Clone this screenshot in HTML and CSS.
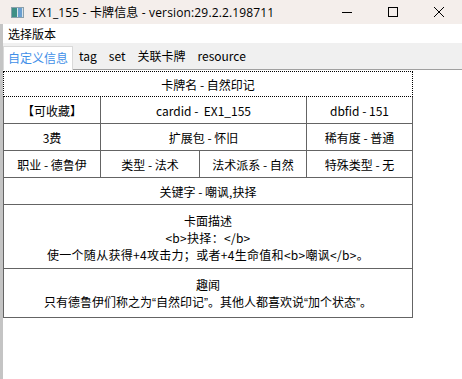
FILE: index.html
```html
<!DOCTYPE html>
<html lang="zh-CN">

<head>
  <meta charset="UTF-8" />
  <title>EX1_155 - 卡牌信息</title>
  <link rel="stylesheet" href="styles.css">
</head>

<body>
  <div class="win">
    <!--标题栏-->
    <div class="titlebar">
      <span class="appicon"><i></i><b></b></span>
      <span class="title">EX1_155 - 卡牌信息 - version:29.2.2.198711</span>
      <span class="ctl">
        <svg width="12" height="12" viewBox="0 0 12 12"><path d="M1 6.5h10" stroke="#000" stroke-width="1"/></svg>
      </span>
      <span class="ctl">
        <svg width="12" height="12" viewBox="0 0 12 12"><rect x="1.5" y="1.5" width="9" height="9" fill="none" stroke="#000" stroke-width="1"/></svg>
      </span>
      <span class="ctl">
        <svg width="12" height="12" viewBox="0 0 12 12"><path d="M1 1l10 10M11 1L1 11" stroke="#000" stroke-width="1"/></svg>
      </span>
    </div>
    <!--菜单-->
    <div class="menubar">选择版本</div>
    <!--选项卡-->
    <div class="tabs">
      <span class="tab current">自定义信息</span>
      <span class="tab">tag</span>
      <span class="tab">set</span>
      <span class="tab">关联卡牌</span>
      <span class="tab">resource</span>
    </div>
    <div class="body">
      <div class="card">
        <div class="row focus"><div class="cell full">卡牌名 - 自然印记</div></div>
        <div class="row">
          <div class="cell c1">【可收藏】</div>
          <div class="cell c23">cardid -&nbsp; EX1_155</div>
          <div class="cell c4">dbfid - 151</div>
        </div>
        <div class="row">
          <div class="cell c1">3费</div>
          <div class="cell c23">扩展包 - 怀旧</div>
          <div class="cell c4">稀有度 - 普通</div>
        </div>
        <div class="row">
          <div class="cell c1">职业 - 德鲁伊</div>
          <div class="cell c2">类型 - 法术</div>
          <div class="cell c3">法术派系 - 自然</div>
          <div class="cell c4">特殊类型 - 无</div>
        </div>
        <div class="row"><div class="cell full">关键字 - 嘲讽,抉择</div></div>
        <div class="row"><div class="cell full multi">卡面描述<br><span class="wide">&lt;b&gt;抉择：&lt;/b&gt;</span><br><span class="wide">使一个随从获得+4攻击力；或者+4生命值和&lt;b&gt;嘲讽&lt;/b&gt;。</span></div></div>
        <div class="row"><div class="cell full multi">趣闻<br>只有德鲁伊们称之为<span class="q">“</span>自然印记<span class="q">”</span>。其他人都喜欢说<span class="q">“</span>加个状态<span class="q">”</span>。</div></div>
      </div>
    </div>
  </div>
</body>

</html>
```

FILE: styles.css
```css
* {
  padding: 0;
  margin: 0;
  box-sizing: border-box;
}

body {
  width: 462px;
  height: 379px;
  overflow: hidden;
  background: #fff;
  font-family: "Noto Sans CJK SC", "Noto Sans", sans-serif;
  font-size: 12px;
  color: #000;
}

.win {
  height: 379px;
  border-left: 3px solid #c4c4c4;
  position: relative;
}

.titlebar {
  height: 24px;
  background: #f4eeeb;
  display: flex;
  align-items: center;
  margin-left: -3px;
}

.appicon {
  width: 13px;
  height: 11px;
  margin-left: 11px;
  margin-right: 8px;
  background: #d8e4ea;
  border: 1px solid #8aa0ac;
  display: flex;
}

.appicon i {
  width: 5px;
  background: #3e8f86;
}

.appicon b {
  width: 4px;
  margin-left: 1px;
  background: #6a9fd0;
}

.title {
  font-family: "Open Sans", "Noto Sans CJK SC", sans-serif;
  font-size: 12px;
  flex: 1;
  letter-spacing: 0.15px;
}

.ctl {
  width: 46px;
  height: 24px;
  display: flex;
  align-items: center;
  justify-content: center;
}

.menubar {
  height: 19px;
  line-height: 19px;
  padding-left: 5px;
  background: #fff;
}

.tabs {
  height: 27px;
  background: #f0f0f0;
  border-bottom: 1px solid #a0a0a0;
  display: flex;
  align-items: flex-end;
}

.tab {
  height: 22px;
  line-height: 20px;
  padding: 0 6px;
  margin-bottom: 1px;
}

.tab.current {
  height: 24px;
  line-height: 22px;
  margin-bottom: -1px;
  background: #fff;
  color: #3f8fe8;
  border: 1px solid #d9d9d9;
  border-bottom: 0;
  padding: 0 4px;
}

.card {
  width: 410px;
  display: flex;
  flex-direction: column;
}

.row {
  display: flex;
  height: 27px;
  border-left: 1px solid #646464;
  border-right: 1px solid #646464;
  border-bottom: 1px solid #646464;
}

.row.focus {
  height: 26px;
  border: 1px dotted #000;
  margin-top: 1px;
}

.cell {
  display: flex;
  align-items: center;
  justify-content: center;
  text-align: center;
  border-right: 1px solid #646464;
}

.cell:last-child {
  border-right: 0;
}

.full {
  flex: 1;
}

.c1 {
  width: 97px;
}

.c23 {
  width: 206px;
}

.c2 {
  width: 99px;
}

.c3 {
  width: 107px;
}

.c4 {
  flex: 1;
}

.row:has(.multi) {
  height: auto;
}

.multi {
  display: block;
  line-height: 17px;
  padding: 7px 0 5px;
}

.wide {
  letter-spacing: 0.3px;
}

.q {
  font-family: "Liberation Sans", sans-serif;
}
```
